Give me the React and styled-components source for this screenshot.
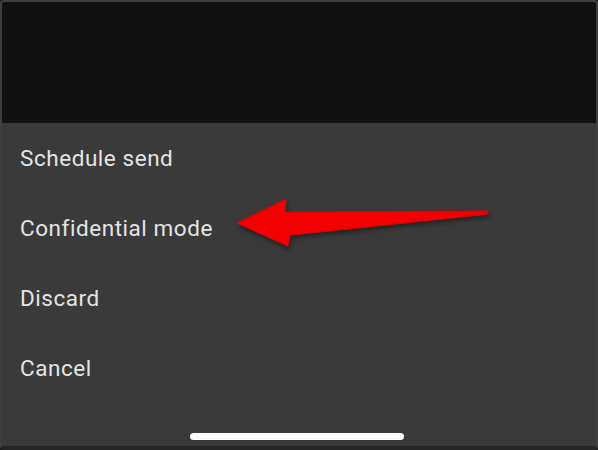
import React from 'react'
import styled, { createGlobalStyle } from 'styled-components'

const Global = createGlobalStyle`
    html, body {
        margin: 0;
        padding: 0;
        background: #1a1a1a;
    }
    body {
        font-family: Roboto, "Noto Sans", "Liberation Sans", sans-serif;
    }
`

const items = ['Schedule send', 'Confidential mode', 'Discard', 'Cancel']

function App() {
    return (
        <>
            <Global />
            <Screen>
                <Backdrop />
                <Sheet>
                    {items.map((label) => (
                        <Item key={label}>{label}</Item>
                    ))}
                    <Spacer />
                    <HomeBar />
                </Sheet>
                {/* annotation arrow pointing at the confidential mode row */}
                <Arrow viewBox="0 0 598 450" width="598" height="450">
                    <defs>
                        <filter id="shadow" x="-10%" y="-30%" width="120%" height="160%">
                            <feDropShadow dx="1" dy="3" stdDeviation="2.5" floodColor="#000" floodOpacity="0.45" />
                        </filter>
                    </defs>
                    <polygon
                        points="237,223 286,199 285,212 488,211 488,214 290,235 288,246"
                        fill="#f50505"
                        stroke="#e00000"
                        strokeWidth="1"
                        strokeLinejoin="round"
                        filter="url(#shadow)"
                    />
                </Arrow>
            </Screen>
        </>
    )
}

export default App

const Screen = styled.div`
    position: relative;
    width: 598px;
    height: 450px;
    box-sizing: border-box;
    display: flex;
    flex-direction: column;
    overflow: hidden;
    border: 2px solid #3f3f3f;
    border-bottom-width: 4px;
    border-bottom-color: #262626;
    border-radius: 4px;
    background: #393939;
`

const Backdrop = styled.div`
    height: 121px;
    background: #121212;
    flex-shrink: 0;
`

const Sheet = styled.div`
    flex: 1;
    display: flex;
    flex-direction: column;
    background: #3a3a3a;
`

const Item = styled.div`
    height: 70px;
    display: flex;
    align-items: center;
    padding-left: 18px;
    font-size: 22.5px;
    letter-spacing: 0.55px;
    color: #e4e4e4;
    flex-shrink: 0;
`

const Spacer = styled.div`
    flex: 1;
`

const HomeBar = styled.div`
    align-self: center;
    width: 214px;
    height: 7px;
    margin: 0 0 6px -4px;
    border-radius: 4px;
    background: #fbfbfb;
`

const Arrow = styled.svg`
    position: absolute;
    left: -2px;
    top: -2px;
    pointer-events: none;
`
